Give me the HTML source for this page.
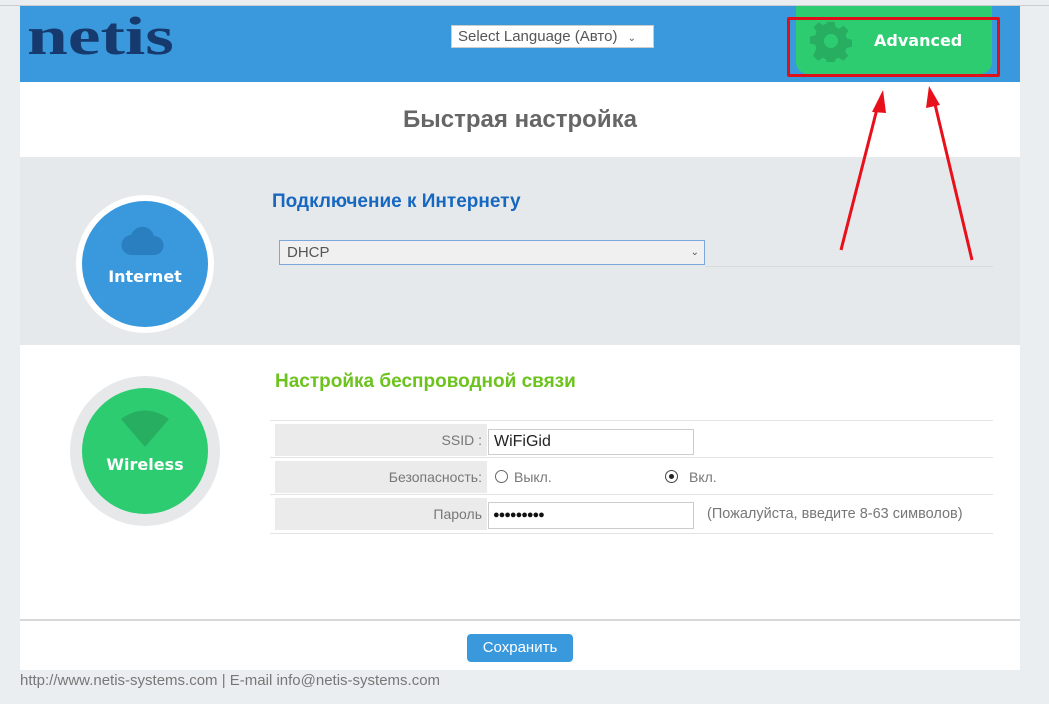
<!DOCTYPE html>
<html><head><meta charset="utf-8"><style>
body{margin:0;width:1049px;height:704px;background:#ebeef0;position:relative;overflow:hidden;font-family:"Liberation Sans",sans-serif}
.a{position:absolute}
</style></head><body>
<div class="a" style="left:0;top:0;width:1049px;height:5px;background:#ebeef0;border-bottom:1px solid #c9ccd0"></div>
<div class="a" style="left:20px;top:6px;width:1000px;height:76px;background:#3a98dc"></div>
<div class="a" style="left:27px;top:9px;font:bold 54px/1 'Liberation Serif',serif;color:#163a6e;transform:scaleX(1.36);transform-origin:left top">netis</div>
<div class="a" style="left:451px;top:25px;width:203px;height:23px;background:#fff;border:1px solid #ccc;box-sizing:border-box;font-size:15px;color:#555;line-height:21px;padding-left:6px">Select Language (Авто) <span style="font-size:10px;margin-left:6px">&#8964;</span></div>
<div class="a" style="left:796px;top:6px;width:196px;height:68px;background:#2ecc71;border-radius:0 0 12px 12px"></div>
<div class="a" style="left:787px;top:17px;width:207px;height:54px;border:3px solid #e0101a;border-radius:2px"></div>
<svg class="a" style="left:810px;top:20px" width="42" height="42" viewBox="0 0 24 24"><path fill="#27ae60" d="M10 1h4l.6 3 2 1 2.6-1.7 2.8 2.8L20.3 8.7l1 2 2.7.6v4l-3 .6-.9 2 1.7 2.6-2.8 2.8-2.6-1.7-2 .9-.6 3h-4l-.6-3-2-.9-2.6 1.7-2.8-2.8L3.7 16l-.9-2-2.8-.6v-4l3-.6.8-2L2.1 4.1l2.8-2.8L7.4 3l2-1zM12 8a4 4 0 1 0 0 8 4 4 0 0 0 0-8z"/></svg>
<div class="a" style="left:874px;top:31px;font:bold 16px 'DejaVu Sans',sans-serif;color:#fff">Advanced</div>
<div class="a" style="left:20px;top:82px;width:1000px;height:75px;background:#fff"></div>
<div class="a" style="left:20px;top:106px;width:1000px;text-align:center;font:bold 24px 'Liberation Sans',sans-serif;color:#666">Быстрая настройка</div>
<div class="a" style="left:20px;top:157px;width:1000px;height:188px;background:#e6e9eb"></div>
<div class="a" style="left:76px;top:195px;width:138px;height:138px;border-radius:50%;background:#fff"></div>
<div class="a" style="left:82px;top:201px;width:126px;height:126px;border-radius:50%;background:#3a98dc"></div>
<svg class="a" style="left:120px;top:225px" width="46" height="32" viewBox="0 0 46 32"><path fill="#2a7fc0" d="M12 30a10 10 0 0 1-1-20 12 12 0 0 1 23 1 9 9 0 0 1 0 19z"/></svg>
<div class="a" style="left:82px;top:267px;width:126px;text-align:center;font:bold 16px 'DejaVu Sans',sans-serif;color:#fff">Internet</div>
<div class="a" style="left:272px;top:191px;font:bold 19px 'Liberation Sans',sans-serif;color:#1768c0">Подключение к Интернету</div>
<div class="a" style="left:279px;top:240px;width:426px;height:25px;background:#f0f0f0;border:1px solid #7ca6dc;box-sizing:border-box;font-size:15px;color:#555;line-height:23px;padding-left:7px">DHCP<span style="position:absolute;right:5px;font-size:10px">&#8964;</span></div>
<div class="a" style="left:705px;top:266px;width:288px;height:1px;background:#d8dbdd"></div>
<div class="a" style="left:20px;top:345px;width:1000px;height:325px;background:#fff"></div>
<div class="a" style="left:70px;top:376px;width:150px;height:150px;border-radius:50%;background:#e6e8e9"></div>
<div class="a" style="left:82px;top:388px;width:126px;height:126px;border-radius:50%;background:#2ecc71"></div>
<svg class="a" style="left:118px;top:408px" width="54" height="40" viewBox="0 0 54 40"><path fill="#27ae60" d="M27 39L3 11Q27-6 51 11z"/></svg>
<div class="a" style="left:82px;top:455px;width:126px;text-align:center;font:bold 16px 'DejaVu Sans',sans-serif;color:#fff">Wireless</div>
<div class="a" style="left:275px;top:371px;font:bold 19px 'Liberation Sans',sans-serif;color:#6cc31d">Настройка беспроводной связи</div>
<div class="a" style="left:270px;top:420px;width:723px;height:1px;background:#e3e3e3"></div>
<div class="a" style="left:270px;top:457px;width:723px;height:1px;background:#e3e3e3"></div>
<div class="a" style="left:270px;top:494px;width:723px;height:1px;background:#e3e3e3"></div>
<div class="a" style="left:270px;top:533px;width:723px;height:1px;background:#e3e3e3"></div>
<div class="a" style="left:275px;top:424px;width:212px;height:32px;background:#ebebeb"></div>
<div class="a" style="left:275px;top:461px;width:212px;height:32px;background:#ebebeb"></div>
<div class="a" style="left:275px;top:498px;width:212px;height:32px;background:#ebebeb"></div>
<div class="a" style="left:275px;top:432px;width:207px;text-align:right;font-size:14px;color:#777">SSID :</div>
<div class="a" style="left:275px;top:469px;width:207px;text-align:right;font-size:14px;color:#777">Безопасность:</div>
<div class="a" style="left:275px;top:506px;width:207px;text-align:right;font-size:14px;color:#777">Пароль</div>
<div class="a" style="left:488px;top:429px;width:206px;height:26px;border:1px solid #ccc;box-sizing:border-box;font-size:16px;color:#222;line-height:24px;padding-left:5px">WiFiGid</div>
<div class="a" style="left:495px;top:470px;width:13px;height:13px;border:1px solid #666;border-radius:50%;box-sizing:border-box"></div>
<div class="a" style="left:514px;top:469px;font-size:14px;color:#777">Выкл.</div>
<div class="a" style="left:665px;top:470px;width:13px;height:13px;border:1px solid #444;border-radius:50%;box-sizing:border-box"></div>
<div class="a" style="left:669px;top:474px;width:5px;height:5px;background:#222;border-radius:50%"></div>
<div class="a" style="left:689px;top:469px;font-size:14px;color:#777">Вкл.</div>
<div class="a" style="left:488px;top:502px;width:206px;height:27px;border:1px solid #ccc;box-sizing:border-box;font-size:11px;color:#111;line-height:25px;padding-left:4px;letter-spacing:-1px">●●●●●●●●●</div>
<div class="a" style="left:707px;top:506px;font-size:14.5px;color:#777">(Пожалуйста, введите 8-63 символов)</div>
<div class="a" style="left:20px;top:619px;width:1000px;height:2px;background:#d6d8da"></div>
<div class="a" style="left:467px;top:634px;width:106px;height:28px;background:#3a98dc;border-radius:4px;color:#fff;font-size:15px;text-align:center;line-height:28px">Сохранить</div>
<div class="a" style="left:20px;top:672px;font-size:15px;color:#777">http://www.netis-systems.com | E-mail info@netis-systems.com</div>
<svg class="a" style="left:0;top:0" width="1049" height="704"><g stroke="#e8101a" stroke-width="3" fill="#e8101a"><line x1="841" y1="250" x2="878" y2="105"/><line x1="972" y1="260" x2="934" y2="100"/><polygon points="883,90 872,112 886,113" stroke="none"/><polygon points="929,86 926,108 940,105" stroke="none"/></g></svg>
</body></html>
